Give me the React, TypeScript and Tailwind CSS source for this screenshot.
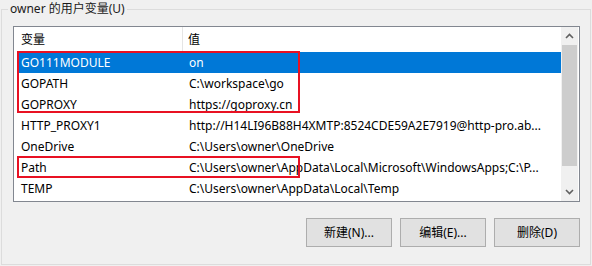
import React from "react"

const rows = [
  { name: "GO111MODULE", value: "on" },
  { name: "GOPATH", value: "C:\\workspace\\go" },
  { name: "GOPROXY", value: "https://goproxy.cn" },
  { name: "HTTP_PROXY1", value: "http://H14LI96B88H4XMTP:8524CDE59A2E7919@http-pro.ab..." },
  { name: "OneDrive", value: "C:\\Users\\owner\\OneDrive" },
  { name: "Path", value: "C:\\Users\\owner\\AppData\\Local\\Microsoft\\WindowsApps;C:\\P..." },
  { name: "TEMP", value: "C:\\Users\\owner\\AppData\\Local\\Temp" },
]

const font = { fontFamily: '"Noto Sans", "Noto Sans CJK SC", sans-serif' }

const Arrow = ({ down }: { down?: boolean }) => (
  <svg width="9" height="6" viewBox="0 0 9 6" className={down ? "rotate-180" : ""}>
    <path d="M1 5 L4.5 1.5 L8 5" fill="none" stroke="#606060" strokeWidth="1.6" />
  </svg>
)

const Button = ({ label }: { label: string }) => (
  <button className="w-[86px] h-[29px] bg-[#e1e1e1] border border-[#adadad] text-[12px] text-black flex items-center justify-center">
    {label}
  </button>
)

export default function App() {
  return (
    <div
      className="w-[592px] h-[266px] bg-[#f0f0f0] pt-[9px] pl-[1px] text-[12px] text-black"
      style={font}
    >
      <div className="relative w-[590px] h-[256px] border border-[#dcdcdc]">
        <div className="absolute -top-[10px] left-[6px] px-[2px] bg-[#f0f0f0] leading-[18px] text-[#1a1a1a]">
          owner 的用户变量(U)
        </div>

        <div className="ml-[11px] mt-[16px] w-[567px] h-[176px] border border-[#828790] bg-white flex relative">
          <div className="flex-1 flex flex-col">
            <div className="h-[25px] flex items-center">
              <div className="w-[169px] h-full pl-[7px] flex items-center border-r border-[#e5e5e5]">变量</div>
              <div className="pl-[5px]">值</div>
            </div>
            {rows.map((r, i) => (
              <div
                key={r.name}
                className={`h-[21px] flex items-center ml-[5px] whitespace-nowrap ${
                  i === 0 ? "bg-[#0078d7] text-white" : ""
                }`}
              >
                <div className="w-[169px] pl-[2px]">{r.name}</div>
                <div className="pl-[1px]">{r.value}</div>
              </div>
            ))}
          </div>
          <div className="w-[17px] mr-[1px] bg-[#f0f0f0] flex flex-col">
            <div className="h-[18px] flex items-center justify-center">
              <Arrow />
            </div>
            <div className="h-[121px] bg-[#cdcdcd] mx-[1px]" />
            <div className="flex-1 flex items-end justify-center pb-[6px]">
              <Arrow down />
            </div>
          </div>

          <div className="absolute left-[3px] top-[24px] w-[283px] h-[62px] border-2 border-[#e81123]" />
          <div className="absolute left-[3px] top-[129px] w-[283px] h-[22px] border-2 border-[#e81123]" />
        </div>

        <div className="flex justify-end gap-2 w-[578px] mt-[16px]">
          <Button label="新建(N)..." />
          <Button label="编辑(E)..." />
          <Button label="删除(D)" />
        </div>
      </div>
    </div>
  )
}
